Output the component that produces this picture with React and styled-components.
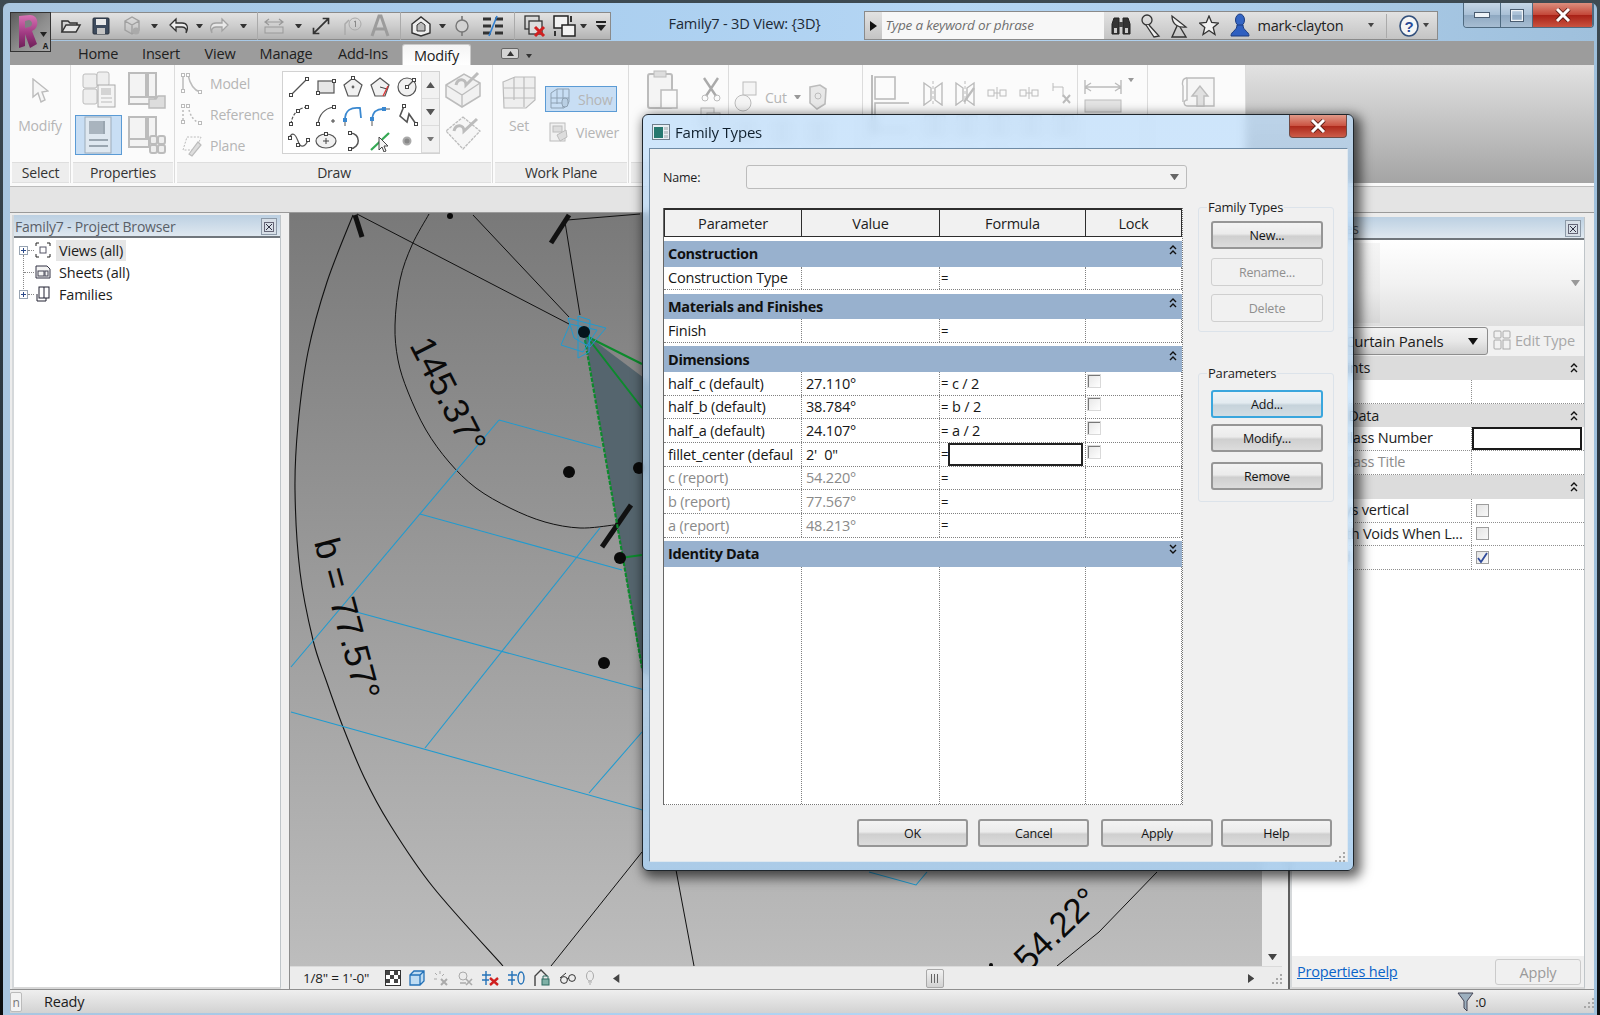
import React from 'react'
import styled, { createGlobalStyle } from 'styled-components'

const UI_FONT = '"Open Sans", "Noto Sans", "Liberation Sans", sans-serif'

const Global = createGlobalStyle`
  html, body { margin: 0; padding: 0; background: #1c2328; }
  * { box-sizing: border-box; }
  #root { width: 1600px; height: 1015px; overflow: hidden; }
`

const Desktop = styled.div`
  position: relative;
  width: 1600px;
  height: 1015px;
  overflow: hidden;
  padding: 3px 3px 0 3px;
  font-family: ${UI_FONT};
  font-size: 14px;
  letter-spacing: -0.2px;
  color: #1c1c1c;
  background: linear-gradient(180deg, #3d4a52 0%, #25303a 60%, #0b0d0f 100%);
`

const Frame = styled.div`
  width: 1594px;
  height: 1012px;
  padding: 0 3px 0 7px;
  border-radius: 6px 6px 0 0;
  background: linear-gradient(90deg, #a9c6e0 0%, #a8cdee 30%, #b5d6f4 60%, #9fc0dc 100%);
`

/* title row */
const TitleBar = styled.div`
  height: 38px;
  display: flex;
  align-items: flex-start;
`
const Qat = styled.div`
  margin-top: 9px;
  width: 601px;
  height: 28px;
  padding-left: 40px;
  display: flex;
  align-items: center;
  border: 1px solid #8a8a8a;
  background: linear-gradient(180deg, #e2e2e2 0%, #cdcdcd 50%, #b3b3b3 100%);
`
const QatSlot = styled.span`
  margin-left: ${p => p.$ml}px;
  width: ${p => p.$w}px;
  height: 24px;
  flex: none;
  display: flex;
  align-items: center;
  justify-content: center;
`
const QatSep = styled.span`
  margin-left: ${p => p.$ml}px;
  width: 1px;
  height: 28px;
  flex: none;
  background: #aaa;
`
const AppButton = styled.div`
  position: absolute;
  left: 10px;
  top: 12px;
  width: 41px;
  height: 40px;
  border: 1px solid #333;
  background: linear-gradient(135deg, #5c5c5c 0%, #8e8e8e 55%, #a8a8a8 100%);
`
const AppCaret = styled.span`
  position: absolute;
  right: 2px;
  bottom: 0;
  font-size: 8px;
  font-weight: 700;
`
const AppDrop = styled.span`
  position: absolute;
  right: 3px;
  top: 19px;
  display: flex;
`
const WindowTitle = styled.div`
  margin-left: 58px;
  margin-top: 10px;
  width: 196px;
  font-size: 14.6px;
  color: #1d2a36;
`
const InfoCenter = styled.div`
  margin-top: 8px;
  width: 574px;
  height: 29px;
  display: flex;
  align-items: center;
  border: 1px solid #8a8a8a;
  background: linear-gradient(180deg, #e2e2e2 0%, #c4c4c4 100%);
`
const InfoArrow = styled.span`
  width: 17px;
  display: flex;
  justify-content: center;
`
const SearchBox = styled.div`
  width: 222px;
  height: 27px;
  padding-left: 3px;
  line-height: 27px;
  font-style: italic;
  font-size: 13.5px;
  color: #6f6f6f;
  background: #f7f7f7;
`
const InfoSlot = styled.span`
  margin-left: ${p => p.$ml}px;
  display: flex;
  align-items: center;
`
const UserName = styled.span`
  margin-left: 6px;
  width: 90px;
  font-size: 14.5px;
  color: #222;
`
const InfoSep = styled.span`
  margin-left: 12px;
  width: 1px;
  height: 24px;
  background: #aaa;
`
const WindowControls = styled.div`
  margin-left: 25px;
  height: 25px;
  display: flex;
  border: 1px solid #4f6a80;
  border-top: 0;
  border-radius: 0 0 4px 4px;
  overflow: hidden;
`
const ControlBtn = styled.div`
  width: ${p => p.$w}px;
  display: flex;
  align-items: center;
  justify-content: center;
  border-right: 1px solid #4f6a80;
  background: ${p => (p.$close
    ? 'linear-gradient(180deg, #dc8f7e 0%, #c4493a 48%, #a92217 52%, #c9523f 100%)'
    : 'linear-gradient(180deg, #c6d7e7 0%, #a9c0d6 48%, #8fa9c2 52%, #a7bdd2 100%)')};
`

/* ribbon */
const TabRow = styled.div`
  height: 24px;
  padding-left: 56px;
  display: flex;
  align-items: flex-end;
  background: #9c9c9c;
`
const Tab = styled.div`
  width: ${p => p.$w}px;
  height: ${p => (p.$active ? 21 : 24)}px;
  display: flex;
  align-items: center;
  justify-content: center;
  font-size: 14.5px;
  color: #202020;
  background: ${p => (p.$active ? 'linear-gradient(180deg, #f4f4f4, #ffffff)' : 'transparent')};
  border: ${p => (p.$active ? '1px solid #c9c9c9' : '0')};
  border-bottom: 0;
  border-radius: 3px 3px 0 0;
`
const RibbonToggle = styled.div`
  margin: 0 0 6px 30px;
  width: 18px;
  height: 11px;
  display: flex;
  align-items: center;
  justify-content: center;
  border: 1px solid #666;
  border-radius: 2px;
  background: #d4d4d4;
`
const TabCaret = styled.span`
  margin: 0 0 7px 7px;
  display: flex;
`
const Ribbon = styled.div`
  height: 118px;
  display: flex;
  background: linear-gradient(180deg, #e2e2e2 0%, #a4a4a4 100%);
`
const RibbonPanel = styled.div`
  width: ${p => p.$w}px;
  height: 118px;
  flex: none;
  display: flex;
  flex-direction: column;
  background: #fbfbfb;
  border-right: 1px solid #dcdcdc;
`
const PanelBody = styled.div`
  height: 97px;
  position: relative;
  display: flex;
  padding: ${p => p.$pad || '0'};
`
const PanelFooter = styled.div`
  height: 21px;
  margin: 0 1px 0 2px;
  text-align: center;
  line-height: 20px;
  font-size: 14px;
  color: #333;
  background: #ededed;
  border-top: 1px solid #dedede;
  border-bottom: 1px solid #e0e0e0;
`
const DimLabel = styled.span`
  font-size: 14px;
  color: #b5b5b5;
`
const SelectBody = styled.div`
  width: 100%;
  display: flex;
  flex-direction: column;
  align-items: center;
  padding-top: 13px;
  gap: 12px;
`
const PropGrid = styled.div`
  display: grid;
  grid-template-columns: 47px 40px;
  grid-template-rows: 38px 40px;
  column-gap: 5px;
  row-gap: 6px;
  padding: 6px 0 0 4px;
  place-items: center;
`
const ActiveTool = styled.div`
  width: 47px;
  height: 40px;
  display: flex;
  align-items: center;
  justify-content: center;
  background: #c8def4;
  border: 1px solid #5b9bd5;
`
const DrawTools = styled.div`
  width: 107px;
  padding-top: 3px;
  display: flex;
  flex-direction: column;
`
const DrawTool = styled.div`
  height: 31px;
  display: flex;
  align-items: center;
  gap: 7px;
  padding-left: 6px;
`
const Gallery = styled.div`
  margin-top: 6px;
  width: 158px;
  height: 83px;
  display: flex;
  background: #fff;
  border: 1px solid #d2d2d2;
`
const GalleryGrid = styled.div`
  width: 138px;
  display: grid;
  grid-template-columns: repeat(5, 27px);
  grid-template-rows: 29px 27px 26px;
  place-items: center;
  padding-left: 2px;
`
const GalleryScroll = styled.div`
  width: 18px;
  display: flex;
  flex-direction: column;
  background: #f1f1f1;
  border-left: 1px solid #d8d8d8;
`
const GalleryArrow = styled.div`
  flex: 1;
  display: flex;
  align-items: center;
  justify-content: center;
  border-bottom: 1px solid #dcdcdc;
`
const WorkIcons = styled.div`
  margin-left: 4px;
  display: flex;
  flex-direction: column;
  gap: 4px;
  padding-top: 6px;
`
const SetTool = styled.div`
  width: 52px;
  padding-top: 9px;
  display: flex;
  flex-direction: column;
  align-items: center;
  gap: 6px;
`
const PlaneTools = styled.div`
  display: flex;
  flex-direction: column;
  padding-top: 21px;
`
const ShowButton = styled.div`
  width: 72px;
  height: 26px;
  display: flex;
  align-items: center;
  gap: 5px;
  padding-left: 3px;
  background: #c8def4;
  border: 1px solid #5b9bd5;
`
const ViewerTool = styled.div`
  margin-top: 9px;
  display: flex;
  align-items: center;
  gap: 7px;
  padding-left: 4px;
`
const FadedRow = styled.div`
  display: flex;
  align-items: ${p => p.$align || 'center'};
  gap: ${p => p.$gap || 8}px;
  padding: ${p => p.$pad || '0'};
`
const FadedColumn = styled.div`
  display: flex;
  flex-direction: column;
  gap: ${p => p.$gap || 6}px;
  padding: ${p => p.$pad || '0'};
`
const RibbonEdge = styled.div`
  height: 4px;
  background: #fafafa;
  border-bottom: 1px solid #bcbcbc;
`
const OptionsBar = styled.div`
  height: 26px;
  background: #e4e4e4;
  border-bottom: 1px solid #9a9a9a;
`

/* workspace */
const Workspace = styled.div`
  height: 776px;
  padding-left: 2px;
  display: flex;
  background: #ececec;
`
const SidePanel = styled.div`
  width: ${p => p.$w}px;
  flex: none;
  margin-top: ${p => p.$top || 2}px;
  display: flex;
  flex-direction: column;
  background: #fff;
  height: ${p => 774 - ((p.$top || 2) - 2)}px;
  border-right: 1px solid #bfc5c9;
  border-left: 2px solid #d5d8da;
  border-bottom: 2px solid #d8d8d8;
`
const PanelTitle = styled.div`
  height: 23px;
  flex: none;
  display: flex;
  align-items: center;
  justify-content: space-between;
  padding: 2px 3px 0 1px;
  font-size: 14px;
  color: #5a6068;
  background: linear-gradient(180deg, #bcd0e2 0%, #dfe8f0 100%);
  border-bottom: 2px solid #70767c;
`
const PanelClose = styled.span`
  width: 16px;
  height: 17px;
  display: flex;
  align-items: center;
  justify-content: center;
  border: 1px solid #8d9aa8;
  background: #d7dfe7;
`
const Tree = styled.div`
  position: relative;
  padding: 1px 0 0 5px;
  &::before {
    content: '';
    position: absolute;
    left: 9px;
    top: 17px;
    height: 36px;
    border-left: 1px dotted #888;
  }
`
const TreeRow = styled.div`
  height: 22px;
  display: flex;
  align-items: center;
`
const Expander = styled.span`
  position: relative;
  z-index: 1;
  width: 9px;
  height: 9px;
  flex: none;
  border: 1px solid #98a4b2;
  background: #fff;
  &::before { content: ''; position: absolute; left: 1px; right: 1px; top: 3px; height: 1px; background: #2c4a8a; }
  &::after { content: ''; position: absolute; top: 1px; bottom: 1px; left: 3px; width: 1px; background: #2c4a8a; }
`
const TreeTick = styled.span`
  margin-left: ${p => p.$hasBox ? 0 : 5}px;
  width: ${p => p.$hasBox ? 6 : 10}px;
  border-top: 1px dotted #888;
`
const TreeIcon = styled.span`
  width: 16px;
  margin-left: 1px;
  display: flex;
  justify-content: center;
`
const TreeLabel = styled.span`
  margin-left: 5px;
  padding: 0 3px;
  height: 21px;
  line-height: 21px;
  font-size: 14.5px;
  color: #1d1d1d;
  background: ${p => (p.$selected ? '#e6e6e6' : 'transparent')};
`
const Splitter = styled.div`
  width: ${p => p.$w}px;
  flex: none;
  background: #efefef;
  border-right: ${p => (p.$dark ? '2px solid #5f5f5f' : '1px solid #8c8c8c')};
`
const ViewColumn = styled.div`
  width: 992px;
  flex: none;
  display: flex;
  flex-direction: column;
`
const ViewRow = styled.div`
  height: 753px;
  display: flex;
`
const Canvas = styled.svg`
  display: block;
  width: 972px;
  height: 753px;
  background: linear-gradient(180deg, #797979 0%, #bdbdbd 100%);
`
const VScroll = styled.div`
  width: 20px;
  padding-bottom: 6px;
  display: flex;
  flex-direction: column;
  justify-content: flex-end;
  align-items: center;
  background: #eeeeee;
`
const ViewBar = styled.div`
  height: 23px;
  display: flex;
  align-items: center;
  background: #ececec;
  border-top: 1px solid #dadada;
`
const ScaleText = styled.span`
  margin-left: 13px;
  width: 83px;
  font-size: 13.5px;
`
const ViewTools = styled.div`
  width: 221px;
  display: flex;
  align-items: center;
  gap: 8px;
`
const ScrollTrack = styled.div`
  flex: 1;
  height: 100%;
  display: flex;
  align-items: center;
`
const ScrollArrow = styled.span`
  margin-left: ${p => p.$ml}px;
  display: flex;
`
const ScrollThumb = styled.span`
  margin-left: ${p => p.$ml}px;
  width: 18px;
  height: 19px;
  display: flex;
  align-items: center;
  justify-content: center;
  gap: 2px;
  border: 1px solid #a9a9a9;
  border-radius: 2px;
  background: linear-gradient(180deg, #f2f2f2, #d2d2d2);
`
const ThumbLine = styled.i`
  width: 1px;
  height: 9px;
  background: #666;
`
const Grip = styled.span`
  margin-left: ${p => p.$ml}px;
  width: 12px;
  height: 12px;
  display: flex;
`

/* properties palette */
const TypePreview = styled.div`
  height: 86px;
  flex: none;
  display: flex;
  justify-content: space-between;
  align-items: center;
  padding-right: 4px;
  background: linear-gradient(180deg, #ffffff 0%, #f2f2f2 50%, #dedede 100%);
`
const Thumb = styled.div`
  width: 88px;
  height: 80px;
  background: linear-gradient(180deg, #f5f5f5 0%, #eaeaea 60%, #d6d6d6 100%);
`
const TypeRow = styled.div`
  height: 30px;
  flex: none;
  display: flex;
  align-items: center;
  background: #f1f1f1;
`
const TypeCombo = styled.div`
  width: 196px;
  height: 28px;
  padding: 0 9px 0 52px;
  display: flex;
  align-items: center;
  justify-content: space-between;
  font-size: 15px;
  border: 1px solid #8d8d8d;
  border-radius: 0 3px 3px 0;
  background: linear-gradient(180deg, #f3f3f3 0%, #e8e8e8 50%, #cfcfcf 100%);
`
const EditType = styled.div`
  margin: -2px 0 0 5px;
  display: flex;
  align-items: center;
  gap: 4px;
  font-size: 14.5px;
  color: #a8a8a8;
`
const PropBand = styled.div`
  height: 23.8px;
  flex: none;
  display: flex;
  align-items: center;
  justify-content: space-between;
  padding: 0 6px 0 3px;
  font-size: 14.5px;
  background: #dcdcdc;
`
const PropRow = styled.div`
  height: 23.8px;
  flex: none;
  display: grid;
  grid-template-columns: 180px 1fr;
  border-bottom: 1px dotted #8f8f8f;
`
const PropName = styled.div`
  padding-left: ${p => p.$indent || 12}px;
  line-height: 22px;
  font-size: 14.5px;
  white-space: nowrap;
  overflow: hidden;
  color: ${p => (p.$dim ? '#8c8c8c' : '#1c1c1c')};
  border-right: 1px dotted #8f8f8f;
`
const PropValue = styled.div`
  padding: 0 0 0 4px;
  display: flex;
  align-items: center;
`
const PropInput = styled.div`
  margin-left: -4px;
  width: 110px;
  height: 23px;
  background: #fff;
  border: 2px solid #1a1a1a;
`
const CheckBox = styled.span`
  width: 13px;
  height: 13px;
  display: flex;
  align-items: center;
  justify-content: center;
  border: 1px solid #9d9d9d;
  background: linear-gradient(135deg, #e4e4e4, #f8f8f8);
`
const PanelSpacer = styled.div`
  flex: 1;
`
const PanelFoot = styled.div`
  height: 31px;
  flex: none;
  display: flex;
  align-items: center;
  justify-content: space-between;
  padding: 0 3px 0 5px;
  background: #f0f0f0;
`
const HelpLink = styled.a`
  font-size: 14.5px;
  color: #0a63c9;
  text-decoration: underline;
`
const FootApply = styled.div`
  width: 86px;
  height: 26px;
  text-align: center;
  line-height: 25px;
  font-size: 14.5px;
  color: #9a9a9a;
  border: 1px solid #cbcbcb;
  border-radius: 3px;
`

/* status */
const StatusBar = styled.div`
  height: 24px;
  display: flex;
  align-items: center;
  border-top: 1px solid #8f8f8f;
  background: linear-gradient(180deg, #efefef 0%, #d2d2d2 100%);
`
const StatusTab = styled.span`
  width: 12px;
  height: 20px;
  line-height: 19px;
  text-align: center;
  font-size: 12px;
  color: #777;
  background: #f3f3f3;
  border: 1px solid #bbb;
  border-radius: 2px;
`
const StatusText = styled.span`
  margin-left: 22px;
  font-size: 14.5px;
`
const FilterCount = styled.span`
  margin-left: auto;
  display: flex;
  align-items: center;
  gap: 1px;
  font-size: 13.5px;
`

/* dialog */
const Dialog = styled.div`
  position: absolute;
  left: 642px;
  top: 114px;
  width: 712px;
  height: 757px;
  padding: 0 5px 8px 6px;
  display: flex;
  flex-direction: column;
  border: 1px solid #1f262c;
  border-radius: 6px;
  background: linear-gradient(180deg, rgba(182, 217, 250, 0.66) 0%, rgba(192, 224, 252, 0.68) 60%, rgba(170, 205, 236, 0.92) 100%);
  backdrop-filter: blur(4px);
  box-shadow: 4px 4px 12px 3px rgba(0, 0, 0, 0.62);
`
const DialogHead = styled.div`
  height: 33px;
  flex: none;
  position: relative;
  display: flex;
  align-items: center;
  gap: 5px;
  padding: 1px 0 0 3px;
  font-size: 15px;
  color: #10202e;
`
const DialogClose = styled.div`
  position: absolute;
  right: 1px;
  top: 0;
  width: 58px;
  height: 23px;
  display: flex;
  align-items: center;
  justify-content: center;
  border: 1px solid #6e4a45;
  border-top: 0;
  border-radius: 0 0 4px 4px;
  background: linear-gradient(180deg, #e19a89 0%, #cb5443 48%, #ae2a1c 52%, #cc5c49 100%);
`
const DialogClient = styled.div`
  flex: 1;
  padding: 16px 0 0 13px;
  background: #f0f0f0;
  border: 1px solid #6f8ba5;
  border-color: #6f8ba5 #dfe8ef #dfe8ef #6f8ba5;
  position: relative;
`
const NameRow = styled.div`
  height: 24px;
  display: flex;
  align-items: center;
  font-size: 12.5px;
`
const NameLabel = styled.span`
  width: 83px;
  flex: none;
`
const NameSelect = styled.div`
  width: 441px;
  height: 24px;
  padding-right: 7px;
  display: flex;
  align-items: center;
  justify-content: flex-end;
  background: #f2f2f2;
  border: 1px solid #bcbcbc;
  border-radius: 3px;
`
const MainRow = styled.div`
  margin-top: 19px;
  display: flex;
  align-items: flex-start;
`
const ParamTable = styled.div`
  width: 520px;
  height: 597px;
  flex: none;
  display: flex;
  flex-direction: column;
  background: #fff;
  border-left: 1px solid #666;
  border-bottom: 1px dotted #777;
  border-right: 1px dotted #777;
`
const HeaderRow = styled.div`
  height: 29px;
  flex: none;
  display: grid;
  grid-template-columns: 138px 138px 146px 1fr;
  margin-bottom: 0.5px;
`
const HeaderCell = styled.div`
  display: flex;
  align-items: center;
  justify-content: center;
  font-size: 14.5px;
  background: #f1f1f1;
  border: 1px solid #2d2d2d;
  border-left-width: ${p => (p.$first ? 1 : 0)}px;
  border-top-width: 2px;
`
const Band = styled.div`
  margin-top: 3.5px;
  height: 25.5px;
  flex: none;
  display: flex;
  align-items: center;
  justify-content: space-between;
  padding: 0 5px 0 4px;
  font-size: 14.5px;
  font-weight: 700;
  letter-spacing: -0.35px;
  color: #101010;
  background: #98b1ce;
`
const Chevron = styled.span`
  margin: -8px 0 0 0;
  display: flex;
`
const ParamRow = styled.div`
  height: 23.7px;
  flex: none;
  display: grid;
  grid-template-columns: 138px 138px 146px 1fr;
  border-bottom: 1px dotted #808080;
`
const Cell = styled.div`
  position: relative;
  padding-left: ${p => p.$pad ?? 4}px;
  display: flex;
  align-items: center;
  font-size: 14.5px;
  white-space: pre;
  overflow: hidden;
  color: ${p => (p.$dim ? '#8a8a8a' : '#161616')};
  border-right: 1px dotted #808080;
`
const Equal = styled.span`
  width: 7px;
  margin-right: ${p => p.$mr}px;
  font-size: 13px;
  color: #161616;
  flex: none;
`
const FormulaInput = styled.div`
  width: 135px;
  height: 100%;
  background: #fff;
  border: 2px solid #222;
  flex: none;
`
const LockBox = styled.span`
  margin: -5px 0 0 -1px;
  width: 12px;
  height: 12px;
  border-top: 1px solid #777;
  border-left: 1px solid #777;
  background: linear-gradient(135deg, #e8e8e8, #ffffff);
  outline: 1px solid #d9d9d9;
`
const EmptyCols = styled.div`
  flex: 1;
  display: grid;
  grid-template-columns: 138px 138px 146px 1fr;
`
const EmptyCol = styled.div`
  border-right: 1px dotted #808080;
`
const GroupColumn = styled.div`
  margin: -11px 0 0 15px;
  width: 136px;
  flex: none;
`
const FieldGroup = styled.fieldset`
  margin: ${p => p.$mt || 0}px 0 0 0;
  min-width: 0;
  padding: 3px 10px ${p => p.$pb}px 12px;
  border: 1px solid #dce3ea;
  border-radius: 3px;
`
const GroupLegend = styled.legend`
  padding: 0 1px;
  margin-left: -4px;
  height: 20px;
  line-height: 20px;
  font-size: 13px;
`
const ButtonFace = styled.div`
  display: flex;
  align-items: center;
  justify-content: center;
  height: 28px;
  margin-top: ${p => p.$mt || 0}px;
  font-size: 12.5px;
  color: ${p => (p.$disabled ? '#8f8f8f' : '#141414')};
  border: ${p => (p.$disabled ? '1px solid #cfcfcf' : p.$focus ? '2px solid #3aa6dd' : '2px solid #969696')};
  border-radius: 3px;
  background: ${p => (p.$disabled
    ? '#f1f1f1'
    : p.$focus
      ? 'linear-gradient(180deg, #eef3f6 0%, #e3ebf0 45%, #c6d3db 55%, #d3dde3 100%)'
      : 'linear-gradient(180deg, #f3f3f3 0%, #ebebeb 45%, #cfcfcf 55%, #dcdcdc 100%)')};
`
const DialogButtons = styled.div`
  margin-top: 14px;
  padding-right: 15px;
  display: flex;
  justify-content: flex-end;
  gap: 10px;
`
const FooterButton = styled(ButtonFace)`
  width: 111.3px;
  margin-left: ${p => p.$ml || 0}px;
`
const ResizeGrip = styled.span`
  position: absolute;
  right: 2px;
  bottom: 2px;
  width: 12px;
  height: 12px;
`

/* svg helpers */
const Ico = ({ w = 20, h = 20, vb, children }) => (
  <svg width={w} height={h} viewBox={vb || `0 0 ${w} ${h}`} fill="none" stroke="#bcbcbc" strokeWidth="1">{children}</svg>
)
const Dot = ({ x, y, c = '#444' }) => <rect x={x - 1.5} y={y - 1.5} width="3" height="3" fill="#fff" stroke={c} />
const Tri = ({ dir = 'down', c = '#444', s = 7 }) => {
  const pts = {
    down: `0,0 ${s},0 ${s / 2},${s * 0.7}`,
    up: `0,${s * 0.7} ${s},${s * 0.7} ${s / 2},0`,
    left: `${s * 0.7},0 ${s * 0.7},${s} 0,${s / 2}`,
    right: `0,0 ${s * 0.7},${s / 2} 0,${s}`,
  }[dir]
  const horiz = dir === 'down' || dir === 'up'
  return (
    <svg width={horiz ? s : s * 0.7} height={horiz ? s * 0.7 : s} viewBox={`0 0 ${horiz ? s : s * 0.7} ${horiz ? s * 0.7 : s}`}>
      <polygon points={pts} fill={c} />
    </svg>
  )
}
const DoubleChevron = ({ down }) => (
  <svg width="8" height="11" viewBox="0 0 8 11" fill="none" stroke="#111" strokeWidth="1.4">
    {down
      ? <path d="M1 1 L4 4 L7 1 M1 6 L4 9 L7 6" />
      : <path d="M1 5 L4 2 L7 5 M1 10 L4 7 L7 10" />}
  </svg>
)
const GripDots = () => (
  <svg width="12" height="12" viewBox="0 0 12 12">
    {[[10, 2], [6, 6], [10, 6], [2, 10], [6, 10], [10, 10]].map(([x, y]) => (
      <rect key={`${x}${y}`} x={x} y={y} width="2" height="2" fill="#a8a8a8" />
    ))}
  </svg>
)

/* quick access icons */
const QOpen = () => <Ico w={22} h={20}><path d="M2 16 V5 H8 L10 7 H17 V9" stroke="#333" strokeWidth="1.5" /><path d="M2 16 L6 9 H20 L16 16 Z" fill="#e4e4e4" stroke="#333" strokeWidth="1.5" /></Ico>
const QSave = () => <Ico w={20} h={20}><rect x="2" y="2" width="16" height="16" rx="1" fill="#3d4a5c" stroke="#28303c" /><rect x="5" y="3" width="10" height="6" fill="#e8e8e8" stroke="none" /><rect x="6" y="12" width="8" height="6" fill="#c4c4c4" stroke="none" /></Ico>
const QSync = () => <Ico w={20} h={22}><path d="M3 6 L10 2 L17 6 V15 L10 19 L3 15 Z M3 6 L10 10 L17 6 M10 10 V19" stroke="#a0a0a0" strokeWidth="1.4" /><circle cx="14" cy="16" r="3.5" fill="#aaa" stroke="none" /></Ico>
const QUndo = () => <Ico w={22} h={18}><path d="M8 2 L2 8 L8 14 V10 H14 C18 10 19 13 18 16 C21 10 19 6 14 6 H8 Z" fill="#eee" stroke="#333" strokeWidth="1.3" /></Ico>
const QRedo = () => <Ico w={22} h={18}><path d="M14 2 L20 8 L14 14 V10 H8 C4 10 3 13 4 16 C1 10 3 6 8 6 H14 Z" fill="#e8e8e8" stroke="#a2a2a2" strokeWidth="1.3" /></Ico>
const QThin = () => <Ico w={22} h={18}><path d="M6 2 L2 5 L6 8 M16 2 L20 5 L16 8 M2 5 H20" stroke="#999" strokeWidth="1.2" /><rect x="2" y="10" width="18" height="6" fill="#c8c8c8" stroke="#999" /></Ico>
const QAlign = () => <Ico w={20} h={20} vb="0 0 24 24"><path d="M4 20 L20 4 M14 3 H21 V10 M3 14 V21 H10" stroke="#333" strokeWidth="2" /></Ico>
const QTag = () => <Ico w={24} h={22}><circle cx="15" cy="9" r="6" stroke="#aaa" /><path d="M5 20 V9 L9 5" stroke="#aaa" strokeWidth="1.5" /><path d="M14 7 L15.5 6 V12" stroke="#888" /></Ico>
const QLetter = () => <Ico w={20} h={24}><path d="M2 22 L9 2 H11 L18 22 M5 15 H15" stroke="#9c9c9c" strokeWidth="3" /></Ico>
const QHome = () => <Ico w={22} h={22}><path d="M2 9 L11 2 L20 9 V18 L11 21 L2 18 Z" fill="#eee" stroke="#333" strokeWidth="1.4" /><path d="M7 10 L11 7 L15 10 V16 H7 Z" fill="#bbb" stroke="#333" /></Ico>
const QSection = () => <Ico w={20} h={24}><path d="M10 2 V22" stroke="#888" strokeWidth="2" /><circle cx="10" cy="12" r="6" fill="#d2d2d2" stroke="#777" strokeWidth="1.4" /></Ico>
const QFine = () => <Ico w={22} h={22}><path d="M1 4 H9 M1 11 H9 M1 18 H9 M13 4 H21 M13 11 H21 M13 18 H21" stroke="#333" strokeWidth="3" /><path d="M15 1 L7 21" stroke="#2f7fd1" strokeWidth="1.6" /></Ico>
const QCloseHidden = () => <Ico w={24} h={24}><rect x="3" y="2" width="14" height="13" stroke="#333" strokeWidth="1.3" /><rect x="7" y="7" width="13" height="13" fill="#ddd" stroke="#333" strokeWidth="1.3" /><path d="M13 13 L22 22 M22 13 L13 22" stroke="#d02020" strokeWidth="3" /></Ico>
const QSwitch = () => <Ico w={24} h={24}><rect x="2" y="2" width="14" height="12" fill="#f2f2f2" stroke="#222" strokeWidth="1.5" /><rect x="10" y="11" width="13" height="11" fill="#f2f2f2" stroke="#222" strokeWidth="1.5" /><path d="M19 2 V8 M3 17 V22" stroke="#333" strokeWidth="2" /></Ico>
const QCustom = () => <Ico w={10} h={10}><rect x="0" y="0" width="10" height="2" fill="#222" stroke="none" /><polygon points="0,4 10,4 5,10" fill="#222" stroke="none" /></Ico>

const qatItems = [
  [QOpen, 8, 24], [QSave, 6, 24], [QSync, 7, 24], ['drop', 6, 8], [QUndo, 9, 24], ['drop', 4, 8],
  [QRedo, 4, 24], ['drop', 8, 8], ['sep', 10], [QThin, 4, 24], ['drop', 8, 8], [QAlign, 7, 24],
  [QTag, 7, 24], [QLetter, 4, 24], ['sep', 8], [QHome, 8, 24], ['drop', 5, 8], [QSection, 4, 24],
  [QFine, 7, 24], ['sep', 9], [QCloseHidden, 7, 24], [QSwitch, 6, 24], ['drop', 3, 8], [QCustom, 9, 10],
]

/* ribbon icons */
const CursorIcon = () => <Ico w={18} h={26}><path d="M2 1 V19 L7 15 L10 24 L14 22 L11 14 L17 13 Z" fill="#f6f6f6" strokeWidth="1.4" /></Ico>
const BlocksIcon = () => <Ico w={36} h={38}><rect x="2" y="3" width="14" height="14" rx="2" fill="#eee" /><rect x="16" y="1" width="12" height="14" rx="2" fill="#eee" /><rect x="2" y="18" width="14" height="15" rx="2" fill="#eee" /><rect x="17" y="14" width="17" height="22" fill="#f4f4f4" stroke="#aaa" /><rect x="20" y="17" width="10" height="7" fill="#d4d4d4" stroke="none" /><path d="M20 27 H31 M20 31 H31" /></Ico>
const TypesIcon = () => <Ico w={38} h={37}><rect x="1" y="1" width="17" height="24" fill="#f3f3f3" strokeWidth="2" /><rect x="20" y="1" width="8" height="24" fill="#f3f3f3" strokeWidth="2" /><rect x="1" y="25" width="26" height="7" fill="#f3f3f3" strokeWidth="2" /><path d="M21 27 H28 L30 24 H37 V36 H21 Z" fill="#ddd" strokeWidth="1.5" /></Ico>
const FamilyParamIcon = () => <Ico w={30} h={38}><rect x="1" y="1" width="26" height="36" fill="#dfe8f0" stroke="#9cabba" /><rect x="5" y="5" width="14" height="13" fill="#a9b4be" stroke="none" /><path d="M20 5 V18 M5 24 H24 M5 30 H24" stroke="#9aa6b0" strokeWidth="2" /></Ico>
const PanelsIcon = () => <Ico w={38} h={38}><rect x="1" y="1" width="17" height="22" fill="#f3f3f3" strokeWidth="2" /><rect x="20" y="1" width="8" height="22" fill="#f3f3f3" strokeWidth="2" /><rect x="1" y="23" width="20" height="8" fill="#f3f3f3" strokeWidth="2" /><rect x="22" y="20" width="7" height="8" rx="2" fill="#eee" strokeWidth="2" /><rect x="30" y="20" width="7" height="8" rx="2" fill="#eee" strokeWidth="2" /><rect x="22" y="29" width="7" height="8" rx="2" fill="#eee" strokeWidth="2" /><rect x="30" y="29" width="7" height="8" rx="2" fill="#eee" strokeWidth="2" /></Ico>
const ModelLineIcon = () => <Ico w={22} h={24}><path d="M2 3 V17 M7 3 C9 12 12 18 19 20" strokeWidth="1.5" /><Dot x={2} y={3} c="#bbb" /><Dot x={7} y={3} c="#bbb" /><Dot x={2} y={19} c="#bbb" /><Dot x={19} y={20} c="#bbb" /></Ico>
const RefLineIcon = () => <Ico w={22} h={24}><path d="M2 3 V17 M7 3 C9 12 12 18 19 20" strokeWidth="1.5" strokeDasharray="2 2" /><Dot x={2} y={3} c="#bbb" /><Dot x={7} y={3} c="#bbb" /><Dot x={2} y={19} c="#bbb" /><Dot x={19} y={20} c="#bbb" /></Ico>
const PlaneIcon = () => <Ico w={22} h={22}><path d="M6 2 H20 L15 15 H2 Z" strokeDasharray="2 1.4" /><path d="M8 19 L17 7 L20 10 L11 21 Z" fill="#ddd" strokeWidth="1.2" /></Ico>
const G = ({ children }) => <Ico w={22} h={22}>{children}</Ico>
const gl = { stroke: '#555', strokeWidth: 1.2 }
const bl = { stroke: '#3a88d0', strokeWidth: 1.8 }
const galleryIcons = [
  <G><path d="M3 19 L19 3" {...gl} /><Dot x={3} y={19} /><Dot x={19} y={3} /></G>,
  <G><rect x="3" y="5" width="16" height="12" fill="#e6e6e6" {...gl} /><Dot x={3} y={17} /><Dot x={19} y={5} /></G>,
  <G><path d="M11 2 L20 9 L16 20 H6 L2 9 Z" fill="#f1f1f1" {...gl} /><Dot x={11} y={2} /><circle cx="11" cy="11" r="1.4" fill="#666" stroke="none" /></G>,
  <G><path d="M11 2 L20 9 L16 20 H6 L2 9 Z" fill="#f1f1f1" {...gl} /><path d="M11 11 L18 13" stroke="#444" /><path d="M19 10 L14 20" stroke="#d33" strokeWidth="1.2" /></G>,
  <G><circle cx="11" cy="11" r="9" fill="#f1f1f1" {...gl} /><path d="M11 11 L17 5" {...gl} /><Dot x={11} y={11} /><Dot x={18} y={4} /></G>,
  <G><path d="M3 20 C4 11 9 5 18 3" {...gl} strokeDasharray="3 1.5" /><Dot x={3} y={20} /><Dot x={10} y={7} /><Dot x={19} y={3} /></G>,
  <G><path d="M3 20 C4 11 9 5 18 3" {...gl} /><Dot x={3} y={20} /><Dot x={19} y={3} /><path d="M16 17 H20 M18 15 V19" stroke="#444" /></G>,
  <G><path d="M3 16 C3 6 9 3 18 4 L19 14" {...bl} fill="none" /><rect x="1" y="14" width="4" height="4" fill="#3a88d0" stroke="none" /><path d="M3 18 V22" stroke="#555" /></G>,
  <G><path d="M3 15 C4 7 8 5 14 5" {...bl} /><rect x="1" y="13" width="4" height="4" fill="#3a88d0" stroke="none" /><rect x="13" y="3" width="4" height="4" fill="#3a88d0" stroke="none" /><path d="M3 17 V22 M17 5 H21" stroke="#555" /></G>,
  <G><path d="M8 2 L4 12 L11 18 L13 10 L20 20" fill="none" {...gl} strokeWidth="1.6" /><Dot x={8} y={2} /><Dot x={20} y={20} /></G>,
  <G><path d="M1 8 C5 0 8 6 10 11 C12 18 17 18 20 10" {...gl} /><Dot x={2} y={8} /><Dot x={10} y={15} /><Dot x={20} y={10} /></G>,
  <G><ellipse cx="11" cy="11" rx="10" ry="7" fill="#f1f1f1" {...gl} /><path d="M8 11 H14 M11 8 V14" stroke="#444" /><Dot x={11} y={4} /></G>,
  <G><path d="M8 3 C19 3 19 18 8 19" fill="none" {...gl} strokeWidth="1.5" /><Dot x={8} y={3} /><Dot x={8} y={19} /></G>,
  <G><path d="M2 20 L20 3" stroke="#34a853" strokeWidth="2.2" /><path d="M10 7 V20 L13 17 L15 22 L17 21 L15 16 L19 16 Z" fill="#f4f4f4" stroke="#444" /></G>,
  <G><circle cx="11" cy="11" r="3.5" fill="#888" stroke="#aaa" strokeWidth="2" /></G>,
]
const SolidIcon = () => <Ico w={38} h={38}><path d="M2 14 L20 3 L36 12 V25 L18 36 L2 26 Z" fill="#f1f1f1" strokeWidth="1.5" /><path d="M2 14 L18 24 L36 12 M18 24 V36" strokeWidth="1.3" /><path d="M12 14 C14 6 22 8 22 14 L34 2" strokeWidth="3" /></Ico>
const VoidIcon = () => <Ico w={38} h={38}><path d="M19 4 L36 18 L19 36 L2 18 Z" fill="#f6f6f6" strokeWidth="1.3" strokeDasharray="3 1" /><path d="M10 18 C12 10 20 12 20 18 L33 6" strokeWidth="3" /></Ico>
const SetPlaneIcon = () => <Ico w={34} h={36}><path d="M1 8 L13 3 H33 V26 L24 34 H2 Z" fill="#eee" strokeWidth="1.2" /><path d="M12 3 V26 M22 3 V33 M2 14 H33 M2 24 H33" strokeWidth="1.2" /></Ico>
const ShowIcon = () => <Ico w={24} h={24}><path d="M2 6 L8 2 H20 V15 L15 21 H2 Z" stroke="#8ea1b3" /><path d="M8 2 V17 M14 2 V21 M2 11 H20 M2 16 H20" stroke="#8ea1b3" /><rect x="13" y="11" width="6" height="9" rx="3" fill="#b9cfe4" stroke="#8ea1b3" /></Ico>
const ViewerIcon = () => <Ico w={20} h={22}><rect x="1" y="2" width="15" height="18" fill="#f1f1f1" /><rect x="4" y="5" width="9" height="6" fill="#ddd" /><path d="M8 14 L17 9 L18 16 L11 20 Z" fill="#ddd" /></Ico>
const ClipboardIcon = () => <Ico w={32} h={40}><rect x="1" y="4" width="24" height="34" rx="2" fill="#f4f4f4" strokeWidth="2" /><rect x="7" y="1" width="12" height="6" fill="#ddd" /><path d="M14 20 H30 V38 H14 Z" fill="#fafafa" strokeWidth="1.5" /></Ico>
const ScissorsIcon = () => <Ico w={22} h={26}><path d="M4 2 L16 20 M18 2 L6 20" strokeWidth="2.4" stroke="#aaa" /><circle cx="5" cy="22" r="3" /><circle cx="17" cy="22" r="3" /></Ico>
const CopyIcon = () => <Ico w={22} h={24}><rect x="1" y="1" width="13" height="17" fill="#f4f4f4" /><rect x="7" y="6" width="13" height="17" fill="#f4f4f4" /></Ico>
const CutShapeIcon = () => <Ico w={24} h={36}><rect x="9" y="3" width="13" height="13" fill="#f4f4f4" /><circle cx="9" cy="24" r="8" fill="#f4f4f4" /></Ico>
const ShieldIcon = () => <Ico w={20} h={26}><path d="M2 3 L12 1 L18 5 L17 20 L9 25 L2 19 Z" fill="#e8e8e8" strokeWidth="1.6" /><circle cx="10" cy="12" r="3" /></Ico>
const AlignIcon = () => <Ico w={38} h={62}><path d="M1 0 V62" strokeWidth="2" /><rect x="4" y="2" width="20" height="22" strokeWidth="1.6" fill="#fbfbfb" /><rect x="4" y="28" width="35" height="27" strokeWidth="1.6" fill="#fbfbfb" /></Ico>
const MirrorIcon = ({ pencil }) => <Ico w={20} h={26}><path d="M1 3 L8 8 V20 L1 25 Z M19 3 L12 8 V20 L19 25 Z" strokeWidth="1.4" /><path d="M10 1 V26" strokeDasharray="3 2" />{pencil && <path d="M9 22 L19 8" strokeWidth="2.2" />}</Ico>
const SmallMoveIcon = () => <Ico w={20} h={14}><rect x="1" y="4" width="6" height="6" /><rect x="13" y="4" width="6" height="6" /><path d="M7 7 H13 M10 1 V13" /></Ico>
const TrimIcon = () => <Ico w={20} h={24}><path d="M2 6 H12 V16" /><path d="M12 14 L19 22 M19 14 L12 22" strokeWidth="2" /><path d="M2 2 V10" /></Ico>
const SmallBoxIcon = () => <Ico w={24} h={24}><rect x="2" y="2" width="9" height="18" /><rect x="13" y="2" width="9" height="18" /></Ico>
const DimIcon = () => <Ico w={38} h={36}><path d="M1 2 V16 M37 2 V16 M1 9 H37 M1 9 L7 5 M1 9 L7 13 M37 9 L31 5 M37 9 L31 13" strokeWidth="1.4" /><rect x="1" y="22" width="36" height="12" fill="#e4e4e4" /></Ico>
const CreateIcon = () => <Ico w={36} h={40}><path d="M7 4 H34 V32 H8 C3 32 3 26 7 26 Z" fill="#f6f6f6" strokeWidth="1.4" /><path d="M7 4 C2 4 2 10 3 12 V28" strokeWidth="1.4" /><path d="M20 12 L12 22 H17 V32 H24 V22 H28 Z" fill="#e0e0e0" strokeWidth="1.4" /></Ico>

/* misc chrome icons */
const Binoculars = () => <Ico w={20} h={24}><path d="M3 4 H8 V20 H1 V10 Z M17 4 H12 V20 H19 V10 Z" fill="#333" stroke="#222" /><rect x="8" y="8" width="4" height="5" fill="#444" stroke="none" /><rect x="3" y="14" width="3" height="5" fill="#ccc" stroke="none" /><rect x="14" y="14" width="3" height="5" fill="#ccc" stroke="none" /></Ico>
const KeyIcon = () => <Ico w={22} h={26}><circle cx="7" cy="7" r="5" stroke="#333" strokeWidth="1.3" /><path d="M9 12 L19 23 L14 24 L6 12" fill="#eee" stroke="#333" strokeWidth="1.3" /></Ico>
const DishIcon = () => <Ico w={20} h={26}><path d="M3 3 C3 12 10 15 17 14 Z" stroke="#333" fill="#eee" strokeWidth="1.3" /><path d="M8 13 L3 24 H17 L11 14" stroke="#333" strokeWidth="1.4" /></Ico>
const StarIcon = () => <Ico w={20} h={22}><polygon points="10,1 12.7,7.5 19.5,8 14.2,12.4 16,19.5 10,15.5 4,19.5 5.8,12.4 0.5,8 7.3,7.5" fill="#f1f1f1" stroke="#333" strokeWidth="1.3" /></Ico>
const UserIcon = () => <Ico w={22} h={26}><ellipse cx="11" cy="7" rx="4.5" ry="6" fill="#3465c4" stroke="#1d3d80" /><path d="M8 12 C8 18 2 18 2 23 H20 C20 18 14 18 14 12 Z" fill="#2f5fc0" stroke="#1d3d80" /></Ico>
const HelpIcon = () => <svg width="22" height="24" viewBox="0 0 22 24" fill="none"><ellipse cx="11" cy="12" rx="9" ry="10" fill="#f6f6f6" stroke="#33507c" strokeWidth="1.6" /><text x="11" y="17.5" textAnchor="middle" fontSize="15" fontWeight="700" fill="#2a4a98" fontFamily="Liberation Sans">?</text></svg>
const MinIcon = () => <svg width="16" height="6" viewBox="0 0 16 6"><rect x="0.5" y="0.5" width="15" height="5" fill="#eef3f7" stroke="#4a5c70" /></svg>
const MaxIcon = () => <svg width="14" height="13" viewBox="0 0 14 13"><rect x="1" y="1" width="12" height="11" fill="none" stroke="#eef3f7" strokeWidth="2.4" /><rect x="0.5" y="0.5" width="13" height="12" fill="none" stroke="#4a5c70" /></svg>
const CloseX = () => <svg width="16" height="14" viewBox="0 0 16 14"><path d="M2 1 L14 13 M14 1 L2 13" stroke="#5a1c14" strokeWidth="4.6" /><path d="M2 1 L14 13 M14 1 L2 13" stroke="#fff" strokeWidth="3" /></svg>
const PanelX = () => <svg width="10" height="10" viewBox="0 0 10 10" fill="none"><rect x="0.5" y="0.5" width="9" height="9" stroke="#667" /><path d="M2 2 L8 8 M8 2 L2 8" stroke="#334" /></svg>
const ViewsIcon = () => <Ico w={16} h={16}><path d="M1 4 V1 H4 M12 1 H15 V4 M15 12 V15 H12 M4 15 H1 V12" stroke="#222" /><rect x="5" y="5" width="6" height="6" stroke="#556" /></Ico>
const SheetIcon = () => <Ico w={16} h={14}><path d="M1 1 H12 L15 4 V13 H1 Z" fill="#f3f3f3" stroke="#334" /><rect x="3" y="6" width="6" height="5" stroke="#445" /><rect x="10" y="6" width="3" height="5" stroke="#445" /></Ico>
const FamilyIcon = () => <Ico w={14} h={16}><rect x="3" y="1" width="10" height="11" fill="#fff" stroke="#223" /><path d="M1 8 V15 H10 V12" stroke="#223" /><path d="M8 1 V12" stroke="#223" /></Ico>
const TitleAppIcon = () => <svg width="18" height="16" viewBox="0 0 18 16"><rect x="0.5" y="0.5" width="17" height="15" fill="#e8eef3" stroke="#6f7f8c" /><rect x="2" y="3" width="9" height="11" fill="#26786f" /><rect x="12" y="3" width="4" height="3" fill="#c0c8cc" /><rect x="12" y="7" width="4" height="3" fill="#c0c8cc" /><rect x="12" y="11" width="4" height="3" fill="#c0c8cc" /></svg>
const FilterIcon = () => <svg width="17" height="20" viewBox="0 0 17 20"><path d="M1 1 H16 L10 9 V19 L7 16 V9 Z" fill="#9db0bf" stroke="#445" /></svg>
const CheckMark = () => <svg width="11" height="11" viewBox="0 0 11 11" fill="none"><path d="M1 6 L4 10 L10 1" stroke="#2f4a9a" strokeWidth="1.8" /></svg>
const EditTypeIcon = () => <Ico w={18} h={20}><rect x="1" y="1" width="7" height="7" rx="1" stroke="#aaa" /><rect x="10" y="1" width="7" height="7" rx="1" stroke="#aaa" /><rect x="1" y="10" width="7" height="9" rx="1" stroke="#aaa" /><rect x="10" y="10" width="7" height="9" stroke="#aaa" /></Ico>

const viewIcons = [
  <Ico w={16} h={16}><rect x="0.5" y="0.5" width="15" height="15" fill="#fff" stroke="#333" /><path d="M1 1 H5 V5 H1 Z M9 1 H13 V5 H9 Z M5 5 H9 V9 H5 Z M13 5 H15 V9 H13 Z M1 9 H5 V13 H1 Z M9 9 H13 V13 H9 Z" fill="#444" stroke="none" /></Ico>,
  <Ico w={16} h={16}><path d="M1 5 L5 1 H15 V11 L11 15 H1 Z M1 5 H11 V15 M11 5 L15 1" fill="#bfdcf2" stroke="#2472b8" strokeWidth="1.3" /></Ico>,
  <Ico w={16} h={16}><path d="M7 1 V4 M2 3 L4 5 M1 9 H4 M11 4 L9 6" stroke="#aaa" /><path d="M8 9 L14 15 M14 9 L8 15" stroke="#aaa" strokeWidth="2" /></Ico>,
  <Ico w={16} h={16}><circle cx="6" cy="6" r="4" stroke="#aaa" /><path d="M3 13 H9 M9 9 L15 15 M15 9 L9 15" stroke="#aaa" strokeWidth="1.6" /></Ico>,
  <Ico w={18} h={16}><path d="M5 1 V15 M1 5 H10 M1 10 H8" stroke="#2472b8" strokeWidth="1.4" /><path d="M9 8 L17 15 M17 8 L9 15" stroke="#d02020" strokeWidth="2.4" /></Ico>,
  <Ico w={18} h={16}><path d="M5 1 V15 M1 5 H10 M1 10 H8" stroke="#2472b8" strokeWidth="1.4" /><ellipse cx="14" cy="8" rx="3" ry="6" stroke="#2472b8" strokeWidth="1.4" /></Ico>,
  <Ico w={18} h={18}><path d="M2 17 V7 L8 1 L14 7" stroke="#444" strokeWidth="1.4" /><rect x="9" y="10" width="7" height="6" fill="#7fb0a6" stroke="#2f6a60" /><path d="M10 10 V7 H15 V10" stroke="#2f6a60" /></Ico>,
  <Ico w={18} h={14}><circle cx="5" cy="9" r="3.4" stroke="#333" /><circle cx="13" cy="7" r="3.4" stroke="#333" /><path d="M8 8 L10 7 M1 7 L7 2" stroke="#333" /></Ico>,
  <Ico w={10} h={16}><ellipse cx="5" cy="6" rx="3.5" ry="5" stroke="#aaa" /><path d="M3 12 H7 M4 14 H6" stroke="#aaa" /></Ico>,
]

/* the model drawn in the view */
const smooth = pts => {
  let d = `M${pts[0][0]} ${pts[0][1]}`
  for (let i = 0; i < pts.length - 1; i++) {
    const p0 = pts[i - 1] || pts[i]
    const p1 = pts[i]
    const p2 = pts[i + 1]
    const p3 = pts[i + 2] || p2
    const c1 = [p1[0] + (p2[0] - p0[0]) / 6, p1[1] + (p2[1] - p0[1]) / 6]
    const c2 = [p2[0] - (p3[0] - p1[0]) / 6, p2[1] - (p3[1] - p1[1]) / 6]
    d += ` C${c1[0]} ${c1[1]} ${c2[0]} ${c2[1]} ${p2[0]} ${p2[1]}`
  }
  return d
}
const BLUE = '#1f9bd0'
const blueLines = [
  'M499 420 L601 448', 'M499 420 L291 667', 'M420 514 L622 570', 'M349 610 L700 705',
  'M600 528 L425 748', 'M291 712 L700 826', 'M642 732 L589 793', 'M869 872 L916 885 L927 872',
]
const thinLines = [
  'M357 214 L569 324', 'M473 215 L569 317', 'M565 222 L580 315', 'M567 220 L640 214',
  'M551 966 L642 852', 'M1057 966 L1099 932 L1157 872', 'M676 870 L694 966',
]
const ticks = ['M355 215 L362 237', 'M551 243 L569 215', 'M631 505 L602 547']
const dots = [[450, 216, 3], [569, 472, 6], [604, 663, 6], [639, 468, 6], [620, 558, 6], [991, 965, 2]]

const ModelDrawing = () => (
  <Canvas viewBox="290 213 972 753">
    <polygon points="584,333 700,420 700,700 642,672 616,518" fill="#55656e" />
    <g fill="none" stroke="#111">
      <path d={smooth([[429, 214], [412, 245], [400, 280], [395, 325], [398, 360], [408, 392], [426, 430], [449, 462], [476, 488], [510, 508], [545, 522], [580, 528], [614, 525]])} strokeWidth="1" />
      <path d={smooth([[353, 215], [327, 282], [308, 352], [298, 425], [295, 490], [300, 572], [313, 640], [326, 680], [343, 727], [364, 777], [389, 823], [433, 887], [503, 966]])} strokeWidth="1.1" />
      {thinLines.map(d => <path key={d} d={d} strokeWidth="1" />)}
      {ticks.map(d => <path key={d} d={d} strokeWidth="5" />)}
    </g>
    <g fill="none" stroke={BLUE} strokeWidth="1.1">
      {blueLines.map(d => <path key={d} d={d} />)}
    </g>
    <g fill="none" stroke="#0c8a2c">
      <path d="M584 333 L642 408 M584 335 L642 364" strokeWidth="2" />
      <path d="M585 340 L616 518 L642 668" strokeWidth="2.2" strokeDasharray="4 1.5" />
      <path d="M620 558 L642 555" strokeWidth="2" />
    </g>
    {dots.map(([x, y, r]) => <circle key={`${x}-${y}`} cx={x} cy={y} r={r} fill="#0a0a0a" />)}
    <g fill="#1fa0d8" fillOpacity="0.06" stroke={BLUE} strokeWidth="1">
      <polygon points="570,324 597,330 583,352 561,345" />
      <polygon points="578,316 590,320 589,352 578,358" />
      <polygon points="568,318 606,328 590,347 574,338" />
    </g>
    <circle cx="584" cy="332" r="6" fill="#05141c" />
    <g fontFamily="Liberation Sans, Arial, sans-serif" fontSize="36" fill="#0a0a0a" letterSpacing="0">
      <text transform="translate(409 345) rotate(63)">145.37°</text>
      <text transform="translate(314 542) rotate(75)">b = 77.57°</text>
      <text fontSize="35" transform="translate(1028 973) rotate(-44)">54.22°</text>
    </g>
  </Canvas>
)

const sections = [
  {
    name: 'Construction',
    rows: [{ name: 'Construction Type' }],
  },
  {
    name: 'Materials and Finishes',
    rows: [{ name: 'Finish' }],
  },
  {
    name: 'Dimensions',
    rows: [
      { name: 'half_c (default)', value: '27.110°', formula: 'c / 2', lock: true },
      { name: 'half_b (default)', value: '38.784°', formula: 'b / 2', lock: true },
      { name: 'half_a (default)', value: '24.107°', formula: 'a / 2', lock: true },
      { name: 'fillet_center (defaul', value: '2\'  0"', editing: true, lock: true },
      { name: 'c (report)', value: '54.220°', dim: true },
      { name: 'b (report)', value: '77.567°', dim: true },
      { name: 'a (report)', value: '48.213°', dim: true },
    ],
  },
  { name: 'Identity Data', collapsed: true, rows: [] },
]

function App() {
  return (
    <Desktop>
      <Global />
      <Frame>
        <TitleBar>
          <Qat>
            {qatItems.map(([Item, ml, w], i) => {
              if (Item === 'sep') return <QatSep key={i} $ml={ml} />
              return (
                <QatSlot key={i} $ml={ml} $w={w}>
                  {Item === 'drop' ? <Tri c="#333" s={7} /> : <Item />}
                </QatSlot>
              )
            })}
          </Qat>
          <WindowTitle>Family7 - 3D View: {'{3D}'}</WindowTitle>
          <InfoCenter>
            <InfoArrow><Tri dir="right" c="#111" s={10} /></InfoArrow>
            <SearchBox>Type a keyword or phrase</SearchBox>
            <InfoSlot $ml={7}><Binoculars /></InfoSlot>
            <InfoSlot $ml={9}><KeyIcon /></InfoSlot>
            <InfoSlot $ml={7}><DishIcon /></InfoSlot>
            <InfoSlot $ml={10}><StarIcon /></InfoSlot>
            <InfoSlot $ml={10}><UserIcon /></InfoSlot>
            <UserName>mark-clayton</UserName>
            <InfoSlot $ml={21}><Tri c="#444" s={6} /></InfoSlot>
            <InfoSep />
            <InfoSlot $ml={11}><HelpIcon /></InfoSlot>
            <InfoSlot $ml={3}><Tri c="#444" s={6} /></InfoSlot>
          </InfoCenter>
          <WindowControls>
            <ControlBtn $w={37}><MinIcon /></ControlBtn>
            <ControlBtn $w={32}><MaxIcon /></ControlBtn>
            <ControlBtn $w={60} $close><CloseX /></ControlBtn>
          </WindowControls>
        </TitleBar>

        <TabRow>
          <Tab $w={64}>Home</Tab>
          <Tab $w={62}>Insert</Tab>
          <Tab $w={56}>View</Tab>
          <Tab $w={76}>Manage</Tab>
          <Tab $w={78}>Add-Ins</Tab>
          <Tab $w={69} $active>Modify</Tab>
          <RibbonToggle><Tri dir="up" c="#333" s={7} /></RibbonToggle>
          <TabCaret><Tri c="#333" s={6} /></TabCaret>
        </TabRow>

        <Ribbon>
          <RibbonPanel $w={61}>
            <PanelBody>
              <SelectBody>
                <CursorIcon />
                <DimLabel>Modify</DimLabel>
              </SelectBody>
            </PanelBody>
            <PanelFooter>Select</PanelFooter>
          </RibbonPanel>
          <RibbonPanel $w={104}>
            <PanelBody>
              <PropGrid>
                <BlocksIcon />
                <TypesIcon />
                <ActiveTool><FamilyParamIcon /></ActiveTool>
                <PanelsIcon />
              </PropGrid>
            </PanelBody>
            <PanelFooter>Properties</PanelFooter>
          </RibbonPanel>
          <RibbonPanel $w={318}>
            <PanelBody>
              <DrawTools>
                <DrawTool><ModelLineIcon /><DimLabel>Model</DimLabel></DrawTool>
                <DrawTool><RefLineIcon /><DimLabel>Reference</DimLabel></DrawTool>
                <DrawTool><PlaneIcon /><DimLabel>Plane</DimLabel></DrawTool>
              </DrawTools>
              <Gallery>
                <GalleryGrid>
                  {galleryIcons.map((icon, i) => <React.Fragment key={i}>{icon}</React.Fragment>)}
                </GalleryGrid>
                <GalleryScroll>
                  <GalleryArrow><Tri dir="up" c="#555" s={9} /></GalleryArrow>
                  <GalleryArrow><Tri c="#555" s={9} /></GalleryArrow>
                  <GalleryArrow><Tri c="#777" s={7} /></GalleryArrow>
                </GalleryScroll>
              </Gallery>
              <WorkIcons>
                <SolidIcon />
                <VoidIcon />
              </WorkIcons>
            </PanelBody>
            <PanelFooter>Draw</PanelFooter>
          </RibbonPanel>
          <RibbonPanel $w={136}>
            <PanelBody>
              <SetTool>
                <SetPlaneIcon />
                <DimLabel>Set</DimLabel>
              </SetTool>
              <PlaneTools>
                <ShowButton><ShowIcon /><DimLabel>Show</DimLabel></ShowButton>
                <ViewerTool><ViewerIcon /><DimLabel>Viewer</DimLabel></ViewerTool>
              </PlaneTools>
            </PanelBody>
            <PanelFooter>Work Plane</PanelFooter>
          </RibbonPanel>
          <RibbonPanel $w={100}>
            <PanelBody>
              <FadedRow $align="flex-start" $gap={21} $pad="5px 0 0 18px">
                <ClipboardIcon />
                <FadedColumn $gap={5} $pad="6px 0 0 0">
                  <ScissorsIcon />
                  <CopyIcon />
                </FadedColumn>
              </FadedRow>
            </PanelBody>
            <PanelFooter />
          </RibbonPanel>
          <RibbonPanel $w={134}>
            <PanelBody>
              <FadedColumn $pad="14px 0 0 5px">
                <FadedRow $gap={7}>
                  <CutShapeIcon />
                  <DimLabel>Cut</DimLabel>
                  <Tri c="#999" s={7} />
                  <ShieldIcon />
                </FadedRow>
                <FadedRow $gap={12}>
                  <SmallBoxIcon />
                  <SmallBoxIcon />
                  <SmallBoxIcon />
                </FadedRow>
              </FadedColumn>
            </PanelBody>
            <PanelFooter />
          </RibbonPanel>
          <RibbonPanel $w={215}>
            <PanelBody>
              <FadedRow $align="flex-start" $gap={14} $pad="10px 0 0 8px">
                <AlignIcon />
                <FadedColumn $gap={8} $pad="5px 0 0 0">
                  <FadedRow $gap={12}>
                    <MirrorIcon />
                    <MirrorIcon pencil />
                    <SmallMoveIcon />
                    <SmallMoveIcon />
                    <TrimIcon />
                  </FadedRow>
                  <FadedRow $gap={8}>
                    <SmallBoxIcon />
                    <SmallBoxIcon />
                    <SmallBoxIcon />
                    <SmallBoxIcon />
                    <SmallBoxIcon />
                  </FadedRow>
                  <FadedRow $gap={14}>
                    <SmallMoveIcon />
                    <SmallMoveIcon />
                    <TrimIcon />
                    <TrimIcon />
                    <SmallMoveIcon />
                  </FadedRow>
                </FadedColumn>
              </FadedRow>
            </PanelBody>
            <PanelFooter />
          </RibbonPanel>
          <RibbonPanel $w={70}>
            <PanelBody>
              <FadedRow $align="flex-start" $gap={6} $pad="13px 0 0 6px">
                <DimIcon />
                <Tri c="#999" s={6} />
              </FadedRow>
            </PanelBody>
            <PanelFooter />
          </RibbonPanel>
          <RibbonPanel $w={98}>
            <PanelBody>
              <FadedRow $align="flex-start" $pad="9px 0 0 32px">
                <CreateIcon />
              </FadedRow>
            </PanelBody>
            <PanelFooter />
          </RibbonPanel>
        </Ribbon>
        <RibbonEdge />
        <OptionsBar />

        <Workspace>
          <SidePanel $w={269}>
            <PanelTitle>
              Family7 - Project Browser
              <PanelClose><PanelX /></PanelClose>
            </PanelTitle>
            <Tree>
              <TreeRow><Expander /><TreeTick $hasBox /><TreeIcon><ViewsIcon /></TreeIcon><TreeLabel $selected>Views (all)</TreeLabel></TreeRow>
              <TreeRow><TreeTick /><TreeIcon><SheetIcon /></TreeIcon><TreeLabel>Sheets (all)</TreeLabel></TreeRow>
              <TreeRow><Expander /><TreeTick $hasBox /><TreeIcon><FamilyIcon /></TreeIcon><TreeLabel>Families</TreeLabel></TreeRow>
            </Tree>
          </SidePanel>
          <Splitter $w={9} />
          <ViewColumn>
            <ViewRow>
              <ModelDrawing />
              <VScroll><Tri c="#444" s={9} /></VScroll>
            </ViewRow>
            <ViewBar>
              <ScaleText>1/8&quot; = 1&apos;-0&quot;</ScaleText>
              <ViewTools>
                {viewIcons.map((icon, i) => <React.Fragment key={i}>{icon}</React.Fragment>)}
              </ViewTools>
              <ScrollTrack>
                <ScrollArrow $ml={10}><Tri dir="left" c="#444" s={9} /></ScrollArrow>
                <ScrollThumb $ml={306}><ThumbLine /><ThumbLine /><ThumbLine /></ScrollThumb>
                <ScrollArrow $ml={304}><Tri dir="right" c="#444" s={9} /></ScrollArrow>
                <Grip $ml={16}><GripDots /></Grip>
              </ScrollTrack>
            </ViewBar>
          </ViewColumn>
          <Splitter $w={8} $dark />
          <SidePanel $w={295} $top={4}>
            <PanelTitle>
              Properties
              <PanelClose><PanelX /></PanelClose>
            </PanelTitle>
            <TypePreview>
              <Thumb />
              <Tri c="#999" s={9} />
            </TypePreview>
            <TypeRow>
              <TypeCombo>Curtain Panels<Tri c="#111" s={10} /></TypeCombo>
              <EditType><EditTypeIcon />Edit Type</EditType>
            </TypeRow>
            <PropBand>Constraints<DoubleChevron /></PropBand>
            <PropRow><PropName>Host</PropName><PropValue /></PropRow>
            <PropBand>Identity Data<DoubleChevron /></PropBand>
            <PropRow><PropName>OmniClass Number</PropName><PropValue><PropInput /></PropValue></PropRow>
            <PropRow><PropName $dim>OmniClass Title</PropName><PropValue /></PropRow>
            <PropBand>Other<DoubleChevron /></PropBand>
            <PropRow><PropName $indent={21}>Always vertical</PropName><PropValue><CheckBox /></PropValue></PropRow>
            <PropRow><PropName $indent={13}>Cut with Voids When L...</PropName><PropValue><CheckBox /></PropValue></PropRow>
            <PropRow><PropName>Shared</PropName><PropValue><CheckBox><CheckMark /></CheckBox></PropValue></PropRow>
            <PanelSpacer />
            <PanelFoot>
              <HelpLink>Properties help</HelpLink>
              <FootApply>Apply</FootApply>
            </PanelFoot>
          </SidePanel>
        </Workspace>

        <StatusBar>
          <StatusTab>n</StatusTab>
          <StatusText>Ready</StatusText>
          <FilterCount><FilterIcon />:0</FilterCount>
          <Grip $ml={96}><GripDots /></Grip>
        </StatusBar>
      </Frame>

      <AppButton>
        <svg width="39" height="38" viewBox="0 0 39 38">
          <defs>
            <linearGradient id="appLogo" x1="0" y1="0" x2="0" y2="1">
              <stop offset="0" stopColor="#d873b4" />
              <stop offset="0.55" stopColor="#a03a82" />
              <stop offset="1" stopColor="#6e1f58" />
            </linearGradient>
          </defs>
          <path d="M8 3 L19 2 C28 2 29 15 21 18 L26 31 L19 35 L14 21 V33 L8 35 Z" fill="url(#appLogo)" />
          <path d="M14 8 L18 7 C22 8 22 13 18 14 L14 15 Z" fill="#7e8082" />
        </svg>
        <AppDrop><Tri c="#222" s={7} /></AppDrop>
        <AppCaret>A</AppCaret>
      </AppButton>

      <Dialog>
        <DialogHead>
          <TitleAppIcon />
          Family Types
          <DialogClose><CloseX /></DialogClose>
        </DialogHead>
        <DialogClient>
          <NameRow>
            <NameLabel>Name:</NameLabel>
            <NameSelect><Tri c="#666" s={9} /></NameSelect>
          </NameRow>
          <MainRow>
            <ParamTable>
              <HeaderRow>
                <HeaderCell $first>Parameter</HeaderCell>
                <HeaderCell>Value</HeaderCell>
                <HeaderCell>Formula</HeaderCell>
                <HeaderCell>Lock</HeaderCell>
              </HeaderRow>
              {sections.map(section => (
                <React.Fragment key={section.name}>
                  <Band>
                    {section.name}
                    <Chevron><DoubleChevron down={section.collapsed} /></Chevron>
                  </Band>
                  {section.rows.map(row => (
                    <ParamRow key={row.name}>
                      <Cell $dim={row.dim}>{row.name}</Cell>
                      <Cell $dim={row.dim}>{row.value}</Cell>
                      <Cell $pad={1}>
                        <Equal $mr={row.editing ? 0 : 4}>=</Equal>
                        {row.editing ? <FormulaInput /> : row.formula}
                      </Cell>
                      <Cell $pad={3}>{row.lock && <LockBox />}</Cell>
                    </ParamRow>
                  ))}
                </React.Fragment>
              ))}
              <EmptyCols>
                <EmptyCol />
                <EmptyCol />
                <EmptyCol />
                <EmptyCol />
              </EmptyCols>
            </ParamTable>
            <GroupColumn>
              <FieldGroup $pb={9}>
                <GroupLegend>Family Types</GroupLegend>
                <ButtonFace $mt={1}>New...</ButtonFace>
                <ButtonFace $mt={9} $disabled>Rename...</ButtonFace>
                <ButtonFace $mt={8} $disabled>Delete</ButtonFace>
              </FieldGroup>
              <FieldGroup $mt={31} $pb={11}>
                <GroupLegend>Parameters</GroupLegend>
                <ButtonFace $mt={4} $focus>Add...</ButtonFace>
                <ButtonFace $mt={6}>Modify...</ButtonFace>
                <ButtonFace $mt={10}>Remove</ButtonFace>
              </FieldGroup>
            </GroupColumn>
          </MainRow>
          <DialogButtons>
            <FooterButton>OK</FooterButton>
            <FooterButton>Cancel</FooterButton>
            <FooterButton $ml={2}>Apply</FooterButton>
            <FooterButton $ml={-2}>Help</FooterButton>
          </DialogButtons>
          <ResizeGrip><GripDots /></ResizeGrip>
        </DialogClient>
      </Dialog>
    </Desktop>
  )
}

export default App
